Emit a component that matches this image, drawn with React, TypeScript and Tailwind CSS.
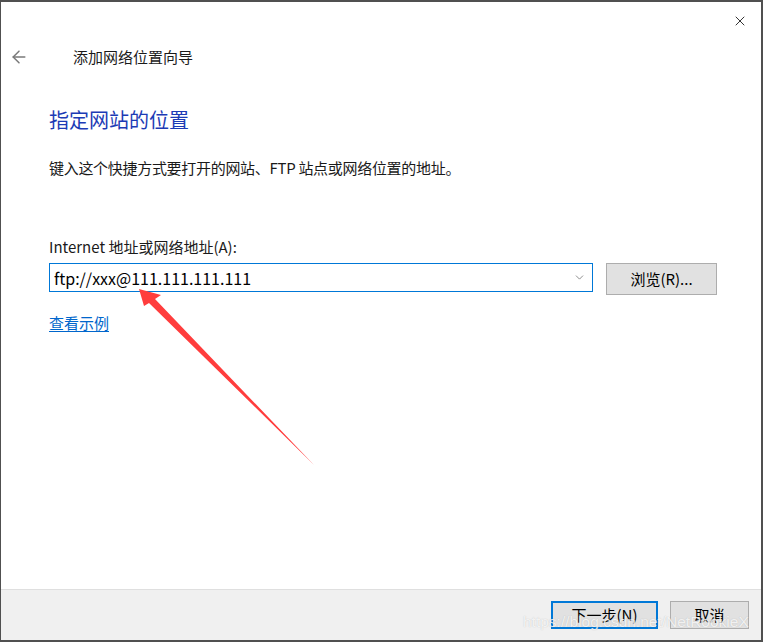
import { ArrowLeft, ChevronDown, X } from 'lucide-react';

const App = () => {
  return (
    <div
      className="relative w-[763px] h-[642px] bg-white border-2 border-[#505050] border-l-[1px] flex flex-col text-[#1a1a1a] overflow-hidden"
      style={{ fontFamily: '"Noto Sans CJK SC", "Noto Sans", sans-serif' }}
    >
      {/* Title bar */}
      <div className="h-[45px] flex justify-end pr-[13px] pt-[11px]">
        <X className="text-black" size={16} strokeWidth={1.2} />
      </div>

      {/* Wizard header */}
      <div className="h-[20px] flex items-center">
        <ArrowLeft className="ml-[8px] text-[#7a7a7a]" size={20} strokeWidth={1.8} />
        <span className="ml-[44px] text-[15px] leading-[20px]">添加网络位置向导</span>
      </div>

      {/* Body */}
      <div className="pl-[48px] flex flex-col">
        <h1 className="mt-[39px] text-[20px] leading-[28px] text-[#1c3bb5] font-normal">指定网站的位置</h1>
        <p className="mt-[24px] text-[15px] leading-[20px] tracking-[-0.3px]">
          键入这个快捷方式要打开的网站、FTP 站点或网络位置的地址。
        </p>

        <label className="mt-[59px] text-[15px] leading-[20px]">Internet 地址或网络地址(A):</label>
        <div className="mt-[6px] flex items-start gap-[13px]">
          <div className="w-[544px] h-[29px] border border-[#0078d7] flex items-center pl-[4px] pr-[6px]">
            <span className="flex-1 text-[16px] leading-[20px] text-black">ftp://xxx@111.111.111.111</span>
            <ChevronDown className="text-[#606060]" size={13} strokeWidth={1.3} />
          </div>
          <button className="w-[111px] h-[32px] bg-[#e1e1e1] border border-[#adadad] text-[15px] leading-[20px] text-black">
            浏览(R)...
          </button>
        </div>

        <a className="mt-[18px] w-fit text-[15px] leading-[20px] text-[#0066cc] underline underline-offset-2">
          查看示例
        </a>
      </div>

      {/* Footer */}
      <div className="mt-auto h-[51px] border-t border-[#dfdfdf] bg-[#f0f0f0] flex justify-end items-start pt-[11px] pr-[12px] gap-[12px]">
        <button className="w-[107px] h-[28px] bg-[#e1e1e1] border-2 border-[#0078d7] text-[15px] leading-[20px] text-black">
          下一步(N)
        </button>
        <button className="w-[79px] h-[28px] bg-[#e1e1e1] border border-[#adadad] text-[15px] leading-[20px] text-black">
          取消
        </button>
      </div>

      {/* Watermark */}
      <div
        className="absolute left-[522px] top-[610px] text-[15.5px] leading-[20px] text-white/80 pointer-events-none"
        style={{ fontFamily: '"Liberation Sans", Arial, sans-serif', textShadow: '0 0 1px rgba(120,120,120,0.45)' }}
      >
        https://blog.csdn.net/NetRookieX
      </div>

      {/* Red annotation arrow */}
      <svg className="absolute left-0 top-0 pointer-events-none" width="763" height="642">
        <polygon points="138,287 160,293 154,297 313,463 148,301 143,304" fill="#ff3d3d" />
      </svg>
    </div>
  );
};

export default App;
